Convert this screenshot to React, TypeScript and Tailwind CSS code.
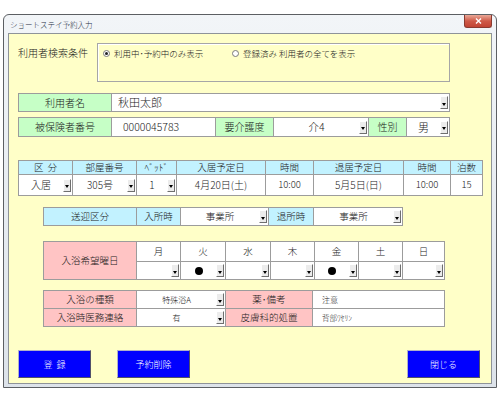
import React from 'react';

// ショートステイ予約入力 form window

function Drop() {
  return (
    <span className="mr-[1px] flex h-[13px] w-[8px] shrink-0 items-center justify-center border border-t-white border-l-white border-r-[#6f6f6f] border-b-[#6f6f6f] bg-[#ececec] pt-[3px]">
      <svg width="4" height="3" viewBox="0 0 4 3">
        <path d="M0 0h4L2 3z" fill="#000" />
      </svg>
    </span>
  );
}

function Label({ children, bg, className = '' }: { children: React.ReactNode; bg: string; className?: string }) {
  return <div className={`flex items-center justify-center ${bg} ${className}`}>{children}</div>;
}

function Value({ children, drop = false, className = '' }: { children?: React.ReactNode; drop?: boolean; className?: string }) {
  return (
    <div className={`flex items-center bg-white ${className}`}>
      <span className="flex-1 text-center whitespace-nowrap">{children}</span>
      {drop && <Drop />}
    </div>
  );
}

function Radio({ checked, label }: { checked?: boolean; label: string }) {
  return (
    <span className="flex items-center gap-[4px]">
      <span className="flex h-[7px] w-[7px] items-center justify-center rounded-full border border-[#7a7a7a] bg-white">
        {checked && <span className="h-[3px] w-[3px] rounded-full bg-[#222]" />}
      </span>
      <span className="text-[8.5px] leading-none">{label}</span>
    </span>
  );
}

const green = 'bg-[#c6ffc6]';
const cyan = 'bg-[#c2f2ff]';
const pink = 'bg-[#ffc4c4]';

const days = ['月', '火', '水', '木', '金', '土', '日'];
const marked = ['', '●', '', '', '●', '', ''];

const btn =
  'h-[28px] w-[73px] border border-t-[#b0b0c8] border-l-[#b0b0c8] border-r-[#50506a] border-b-[#50506a] bg-[#0000ff] text-[9px] text-white';

export default function App() {
  return (
    <div className="h-[400px] w-[500px] bg-white pt-[14px] pl-[3px] font-['Noto_Sans_CJK_JP',sans-serif] font-light text-[#1a1a1a]">
      <div className="flex h-[374px] w-[494px] flex-col rounded-t-[6px] border border-[#5c5f63] bg-gradient-to-b from-[#f2f5f8] to-[#dde3ea] px-[4px] pb-[3px]">
        {/* Title bar */}
        <div className="flex h-[18px] items-start justify-between">
          <span className="pl-[2px] pt-[6px] text-[7.5px] leading-none text-[#1f2f44]">ショートステイ予約入力</span>
          <span className="flex h-[13px] w-[28px] items-center justify-center rounded-b-[3px] border border-t-0 border-[#8a3a30] bg-gradient-to-b from-[#e9a898] via-[#cf5a48] to-[#c24434]">
            <svg width="7" height="6" viewBox="0 0 7 6">
              <path d="M1 0.5l5 5M6 0.5l-5 5" stroke="#fff" strokeWidth="1.4" />
            </svg>
          </span>
        </div>

        {/* Content */}
        <div className="flex flex-1 flex-col border border-[#8e9399] bg-[#ffffc8] pl-[9px] pr-[11px] text-[10px] leading-none">
          {/* Search condition */}
          <div className="mt-[9px] flex items-start">
            <span className="w-[79px] pt-[5px] text-[10px]">利用者検索条件</span>
            <div className="h-[39px] w-[353px] border border-[#a6a6a6] shadow-[inset_1px_1px_0_#fff]">
              <div className="flex pt-[5px] pl-[5px]">
                <span className="w-[129px]">
                  <Radio checked label="利用中･予約中のみ表示" />
                </span>
                <Radio label="登録済み 利用者の全てを表示" />
              </div>
            </div>
          </div>

          {/* 利用者名 */}
          <div className="mt-[11px] grid h-[19px] w-[432px] grid-cols-[92px_1fr] gap-px bg-[#9c9c9c] p-px">
            <Label bg={green}>利用者名</Label>
            <div className="flex items-center bg-white">
              <span className="flex-1 pl-[6px] text-[11px]">秋田太郎</span>
              <Drop />
            </div>
          </div>

          {/* 被保険者番号 row */}
          <div className="mt-[5px] grid h-[20px] w-[432px] grid-cols-[92px_103px_57px_94px_37px_1fr] gap-px bg-[#9c9c9c] p-px">
            <Label bg={green}>被保険者番号</Label>
            <div className="flex items-center bg-white pl-[11px] text-[10.5px]">0000045783</div>
            <Label bg={green}>要介護度</Label>
            <Value drop className="text-[10.5px]">介4</Value>
            <Label bg={green}>性別</Label>
            <Value drop className="text-[11px]">男</Value>
          </div>

          {/* Stay table */}
          <div className="mt-[23px] grid w-[465px] grid-cols-[53px_63px_39px_88px_47px_89px_46px_1fr] grid-rows-[13px_20px] gap-px bg-[#9c9c9c] p-px text-[9.5px]">
            <Label bg={cyan}>区&nbsp;&nbsp;分</Label>
            <Label bg={cyan}>部屋番号</Label>
            <Label bg={cyan}>ﾍﾞｯﾄﾞ</Label>
            <Label bg={cyan}>入居予定日</Label>
            <Label bg={cyan}>時間</Label>
            <Label bg={cyan}>退居予定日</Label>
            <Label bg={cyan}>時間</Label>
            <Label bg={cyan}>泊数</Label>
            <Value drop className="text-[10px]">入居</Value>
            <Value drop className="text-[10px]">305号</Value>
            <Value drop className="text-[10px]">1</Value>
            <Value className="text-[10px]">4月20日(土)</Value>
            <Value className="text-[9.5px]">10:00</Value>
            <Value className="text-[10px]">5月5日(日)</Value>
            <Value className="text-[9.5px]">10:00</Value>
            <Value className="text-[9.5px]">15</Value>
          </div>

          {/* 送迎区分 */}
          <div className="mt-[11px] ml-[25px] grid h-[19px] w-[360px] grid-cols-[92px_43px_87px_44px_1fr] gap-px bg-[#9c9c9c] p-px text-[9.5px]">
            <Label bg={cyan}>送迎区分</Label>
            <Label bg={cyan}>入所時</Label>
            <Value drop>事業所</Value>
            <Label bg={cyan}>退所時</Label>
            <Value drop>事業所</Value>
          </div>

          {/* 入浴希望曜日 */}
          <div className="mt-[15px] ml-[25px] grid h-[39px] w-[402px] grid-cols-[92px_43px_44px_44px_43px_43px_43px_1fr] grid-rows-[19px_17px] gap-px bg-[#9c9c9c] p-px text-[9.5px]">
            <Label bg={pink} className="row-span-2">入浴希望曜日</Label>
            {days.map((d) => (
              <Label key={d} bg="bg-white">{d}</Label>
            ))}
            {marked.map((m, i) => (
              <div key={i} className="flex items-center bg-white">
                <span className="flex flex-1 justify-center">
                  {m && <span className="h-[8px] w-[8px] rounded-full bg-black" />}
                </span>
                <Drop />
              </div>
            ))}
          </div>

          {/* 入浴 details */}
          <div className="mt-[10px] ml-[25px] grid h-[37px] w-[402px] grid-cols-[92px_88px_86px_1fr] grid-rows-2 gap-px bg-[#9c9c9c] p-px text-[9.5px]">
            <Label bg={pink}>入浴の種類</Label>
            <Value drop className="text-[8px]">特殊浴A</Value>
            <Label bg={pink}>薬･備考</Label>
            <div className="flex items-center bg-white pl-[9px] text-[8px]">注意</div>
            <Label bg={pink}>入浴時医務連絡</Label>
            <Value drop className="text-[8px]">有</Value>
            <Label bg={pink}>皮膚科的処置</Label>
            <div className="flex items-center bg-white pl-[9px] text-[7.5px]">背部ﾜｾﾘﾝ</div>
          </div>

          {/* Buttons */}
          <div className="mt-[23px] flex">
            <button className={btn}>登&nbsp;&nbsp;録</button>
            <button className={`ml-[26px] ${btn}`}>予約削除</button>
            <button className={`ml-auto ${btn}`}>閉じる</button>
          </div>
        </div>
      </div>
    </div>
  );
}
